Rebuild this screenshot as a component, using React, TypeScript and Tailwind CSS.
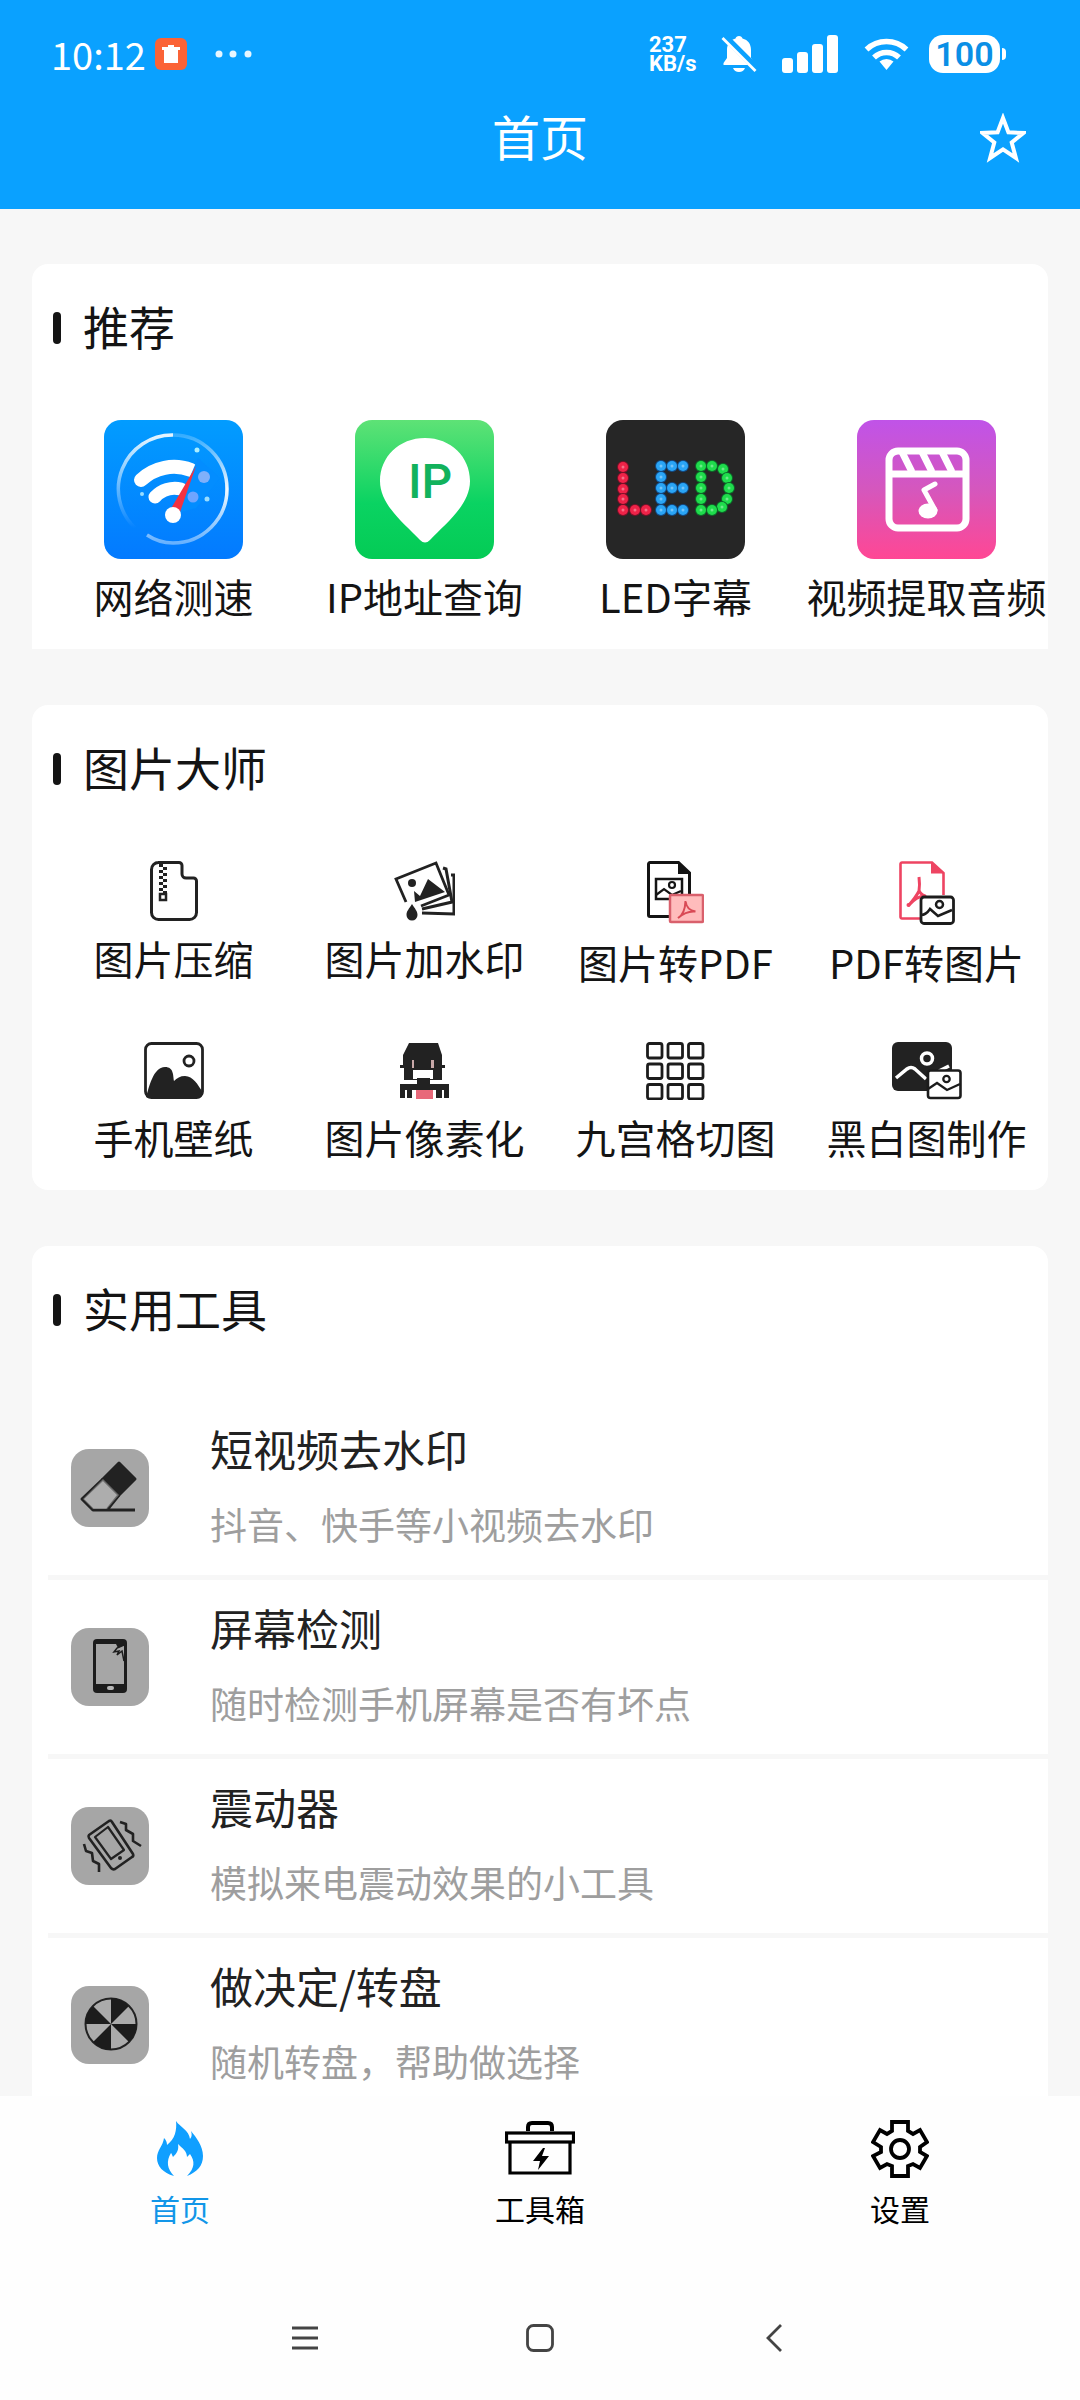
import React from 'react';

const INK = '#222222';

/* ---------- Status bar ---------- */

const TrashBadge = () => (
  <svg width="32" height="32" viewBox="0 0 32 32">
    <rect width="32" height="32" rx="6" fill="#fb6336" />
    <path d="M13 7h6v2h6v3H7V9h6z" fill="#fff" />
    <path d="M9 12h14v13H9z" fill="#fff" />
  </svg>
);

const MoreDots = () => (
  <svg width="38" height="8" viewBox="0 0 38 8" fill="#fff" fillOpacity="0.9">
    <circle cx="4" cy="4" r="3.5" />
    <circle cx="18" cy="4" r="3.5" />
    <circle cx="33" cy="4" r="3.5" />
  </svg>
);

const BellOffIcon = () => (
  <svg width="41" height="38" viewBox="0 0 41 38">
    <path
      d="M18 1c2 0 3 1 3.500 2.500C27 5 30 9 30 15v8l3.500 5v2h-31v-2L6 23v-8C6 9 9 5 14.500 3.500 15 2 16 1 18 1z"
      fill="#fff"
    />
    <path d="M12 33h12c-1 2.500-3 4-6 4s-5-1.500-6-4z" fill="#fff" />
    <path d="M3 1l33 33" stroke="#0aa1ff" strokeWidth="7" />
    <path d="M1.500 3l33 33" stroke="#fff" strokeWidth="2.800" />
  </svg>
);

const SignalIcon = () => (
  <svg width="62" height="40" viewBox="0 0 62 40" fill="#fff">
    <rect x="0" y="24" width="11" height="15" rx="3" />
    <rect x="15" y="18" width="11" height="21" rx="3" />
    <rect x="30" y="10" width="11" height="29" rx="3" />
    <rect x="45" y="1" width="11" height="38" rx="3" />
  </svg>
);

const WifiIcon = () => (
  <svg width="45" height="34" viewBox="0 0 45 34" fill="none" stroke="#fff" strokeWidth="5.500">
    <path d="M2.500 12.500a29 29 0 0 1 40 0" />
    <path d="M10 20.500a18 18 0 0 1 25 0" />
    <path d="M22.500 33l-7-8.500a11 11 0 0 1 14 0z" fill="#fff" stroke="none" />
  </svg>
);

const StarIcon = () => (
  <svg width="46" height="50" viewBox="0 0 46 50">
    <path
      d="M23 5l5.400 14.300 15 .7-11.700 9.500 4.200 15.500L23 36.300 10.100 45l4.200-15.500L2.600 20l15-.7z"
      fill="none"
      stroke="#fff"
      strokeWidth="4"
    />
  </svg>
);

/* ---------- Recommended tiles ---------- */

const SpeedTestTile = () => (
  <svg width="139" height="139" viewBox="0 0 139 139">
    <defs>
      <linearGradient id="speedBg" x1="0" y1="0" x2="0" y2="1">
        <stop offset="0" stopColor="#029cff" />
        <stop offset="1" stopColor="#037aff" />
      </linearGradient>
      <linearGradient id="speedRingA" x1="0" y1="0" x2="0" y2="1">
        <stop offset="0" stopColor="#fff" stopOpacity="0.9" />
        <stop offset="1" stopColor="#fff" stopOpacity="0" />
      </linearGradient>
      <linearGradient id="speedRingB" x1="0" y1="0" x2="0" y2="1">
        <stop offset="0" stopColor="#fff" stopOpacity="0.2" />
        <stop offset="0.5" stopColor="#fff" stopOpacity="0.95" />
        <stop offset="1" stopColor="#fff" stopOpacity="0.4" />
      </linearGradient>
    </defs>
    <rect width="139" height="139" rx="17" fill="url(#speedBg)" />
    <path d="M31 108A54 54 0 0 1 69 15" fill="none" stroke="url(#speedRingA)" strokeWidth="3.500" />
    <path d="M69 15a54 54 0 0 1 0 108q-14 0-26-8" fill="none" stroke="url(#speedRingB)" strokeWidth="3.500" />
    <path d="M37 60a48 48 0 0 1 50-10" fill="none" stroke="#fff" strokeWidth="14" strokeLinecap="round" />
    <path d="M51 77a27 27 0 0 1 26-8" fill="none" stroke="#fff" strokeWidth="13" strokeLinecap="round" />
    <path d="M94 38l22 20-24 30-22 6z" fill="#038dff" />
    <circle cx="100" cy="57" r="6" fill="#7fb0fa" />
    <circle cx="89" cy="77" r="5.500" fill="#6fa5ff" />
    <circle cx="93" cy="30" r="2.500" fill="#aef" />
    <circle cx="103" cy="79" r="2.500" fill="#9df" />
    <circle cx="38" cy="74" r="2" fill="#9df" />
    <path d="M92 46L65 92l10 3z" fill="#f4323f" />
    <circle cx="69" cy="95" r="8" fill="#fff" />
  </svg>
);

const IpTile = () => (
  <svg width="139" height="139" viewBox="0 0 139 139">
    <defs>
      <linearGradient id="ipBg" x1="0" y1="0" x2="0" y2="1">
        <stop offset="0" stopColor="#5ee276" />
        <stop offset="0.6" stopColor="#0ad362" />
        <stop offset="1" stopColor="#04cb55" />
      </linearGradient>
    </defs>
    <rect width="139" height="139" rx="17" fill="url(#ipBg)" />
    <path
      d="M70 18c26 0 45 19 45 43 0 24-24 42-40 59q-5 5-10 0C49 103 25 85 25 61c0-24 19-43 45-43z"
      fill="#fff"
    />
    <text x="75" y="78" textAnchor="middle" fontFamily="Roboto, sans-serif" fontWeight="500" fontSize="48" fill="#12b25c">
      IP
    </text>
  </svg>
);

const LED_DOTS = [
  { color: '#ee2348', glow: '#7a1028', dots: [[17, 47], [17, 58], [17, 69], [17, 79], [17, 90], [29, 90], [40, 90]] },
  {
    color: '#2aa5f5',
    glow: '#124a86',
    dots: [
      [55, 46], [66, 46], [77, 46], [55, 57], [55, 68], [66, 68], [77, 68],
      [55, 79], [55, 90], [66, 90], [77, 90],
    ],
  },
  {
    color: '#1fdc4c',
    glow: '#0d6a2a',
    dots: [
      [95, 46], [106, 46], [117, 49], [121, 58], [123, 68], [121, 79], [116, 87],
      [106, 90], [95, 90], [95, 79], [95, 68], [95, 57],
    ],
  },
];

const LedTile = () => (
  <svg width="139" height="139" viewBox="0 0 139 139">
    <rect width="139" height="139" rx="17" fill="#262626" />
    {LED_DOTS.map((letter) =>
      letter.dots.map(([x, y]) => (
        <g key={`${x}-${y}`}>
          <circle cx={x} cy={y} r="6" fill={letter.glow} />
          <circle cx={x} cy={y} r="5" fill={letter.color} />
          <circle cx={x} cy={y} r="1.500" fill="#fff" fillOpacity="0.35" />
        </g>
      ))
    )}
  </svg>
);

const ExtractAudioTile = () => (
  <svg width="139" height="139" viewBox="0 0 139 139">
    <defs>
      <linearGradient id="audioBg" x1="0" y1="0" x2="0" y2="1">
        <stop offset="0" stopColor="#c053e8" />
        <stop offset="0.5" stopColor="#d557bd" />
        <stop offset="1" stopColor="#ff4794" />
      </linearGradient>
    </defs>
    <rect width="139" height="139" rx="17" fill="url(#audioBg)" />
    <rect x="32" y="31" width="77" height="77" rx="9" fill="none" stroke="#fff" strokeWidth="7" />
    <path d="M32 54h77" stroke="#fff" strokeWidth="7" />
    <path d="M45 32l10 20M65 32l10 20M85 32l10 20" stroke="#fff" strokeWidth="7" />
    <ellipse cx="71" cy="91" rx="9.500" ry="7.500" fill="#fff" />
    <path d="M78 64l-11 6 11 20" fill="none" stroke="#fff" strokeWidth="5" strokeLinejoin="round" strokeLinecap="round" />
  </svg>
);

/* ---------- Picture tools ---------- */

const ZipIcon = () => (
  <svg width="48" height="60" viewBox="0 0 48 60" fill="none" stroke={INK} strokeWidth="3">
    <path d="M8 1.500h21a3 3 0 0 1 3 3V13a4 4 0 0 0 4 4h7.500a3 3 0 0 1 3 3v31.500a7 7 0 0 1-7 7H8.500a7 7 0 0 1-7-7V8.500a7 7 0 0 1 7-7z" />
    <path d="M11 3v28" strokeDasharray="3 3" strokeWidth="4" />
    <path d="M15 6v26" strokeDasharray="3 3" strokeWidth="4" />
    <rect x="10" y="33" width="6" height="6" strokeWidth="2.500" />
  </svg>
);

const WatermarkIcon = () => (
  <svg width="61" height="60" viewBox="0 0 61 60" fill="none" stroke={INK} strokeWidth="2.800">
    <path d="M12 41L2 18 42 2l13 32-28 11" />
    <path d="M49 7l3 1 6 33-30 7" strokeWidth="3" />
    <path d="M57 14h3v39l-32-1" strokeWidth="3" />
    <circle cx="18" cy="22" r="4" fill={INK} stroke="none" />
    <path d="M21 41l-1-11 6 5 8-17 17 13z" fill={INK} stroke="none" />
    <path d="M18 43c3 5 5.500 7 5.500 11a5.500 5.500 0 0 1-11 0c0-4 2.500-6 5.500-11z" fill={INK} stroke="none" />
  </svg>
);

const ImageToPdfIcon = () => (
  <svg width="57" height="64" viewBox="0 0 57 64" fill="none" stroke="#141414" strokeWidth="3">
    <path d="M22 55.500H3a1.500 1.500 0 0 1-1.500-1.500V3A1.500 1.500 0 0 1 3 1.500h28.500L42.500 12v21" />
    <path d="M31 1v12h12z" fill="#141414" stroke="none" />
    <rect x="9" y="18" width="26" height="20" strokeWidth="2.500" />
    <circle cx="25" cy="24" r="3" strokeWidth="2.200" />
    <path d="M9 34l8-6 8 6 9-4" strokeWidth="2.200" />
    <rect x="23" y="34" width="33" height="27" rx="1" fill="#ffbcbc" stroke="#d9606c" strokeWidth="2.500" />
    <path d="M31 57q7-4 7.500-17 1 9 10 10.500-9-1-17.500 6.500z" stroke="#d94a55" strokeWidth="2" />
  </svg>
);

const PdfToImageIcon = () => (
  <svg width="56" height="64" viewBox="0 0 56 64" fill="none" stroke="#ee4462" strokeWidth="2.600">
    <path d="M21 57.500H3A1.500 1.500 0 0 1 1.500 56V3A1.500 1.500 0 0 1 3 1.500h30L44.500 12v22" />
    <path d="M32 1v11.500h13z" fill="#ee4462" stroke="none" />
    <path d="M20 16q1 8 0 14-3 6-10 14 8-9 16-9-5-2-6-6" strokeLinejoin="round" strokeWidth="3" />
    <circle cx="9.500" cy="44" r="2" fill="#ee4462" stroke="none" />
    <rect x="22" y="36" width="32.500" height="26.500" rx="3" fill="#fff" stroke="#1c1c1c" strokeWidth="2.800" />
    <circle cx="40.500" cy="43.500" r="3.500" stroke="#1c1c1c" strokeWidth="2.500" />
    <path d="M22 54q5 0 9-6l8 7 14-6" stroke="#1c1c1c" strokeWidth="2.500" />
  </svg>
);

const WallpaperIcon = () => (
  <svg width="60" height="58" viewBox="0 0 60 58" fill="none" stroke={INK} strokeWidth="2.800">
    <rect x="1.500" y="1.500" width="57" height="54" rx="6" />
    <circle cx="45" cy="19" r="5" />
    <path
      d="M2 55C5 46 9 25 21 25c9 0 8 9 9 14 3-3 6-5 11-5 8 0 13 9 17 15l-2 7H4z"
      fill={INK}
      stroke="none"
    />
  </svg>
);

const PixelateIcon = () => (
  <svg width="49" height="58" viewBox="0 0 49 58" fill={INK}>
    <path d="M9 1h29l4 12v10h3v3h-3v12H4V26H0v-3h3V13z" />
    <path d="M12 18h2v8h-2zM31 18h3v8h-3z" fill="#c9a9a9" />
    <path d="M13 28h20v9H13z" fill="#fff" />
    <path d="M17 36h13v6h19v14h-5v-8h-2v8h-6v-8H12v8H7v-8H5v8H0V42h17z" />
    <path d="M16 48h17v9H16z" fill="#e8697a" />
  </svg>
);

const NineGridIcon = () => (
  <svg width="59" height="58" viewBox="0 0 59 58" fill="none" stroke="#1c1c1c" strokeWidth="2.800">
    {[1.5, 22, 42.5].map((y) =>
      [1.5, 22, 42.5].map((x) => <rect key={`${x}-${y}`} x={x} y={y} width="14.500" height="14.500" rx="2" />)
    )}
  </svg>
);

const BlackWhiteIcon = () => (
  <svg width="70" height="58" viewBox="0 0 70 58" fill="none">
    <rect width="60" height="49" rx="6" fill={INK} />
    <circle cx="35" cy="16.500" r="5.500" stroke="#fff" strokeWidth="3.500" />
    <path d="M4 36l11-9q4-3 8 0l11 10M47 29l10-5" stroke="#fff" strokeWidth="3.500" />
    <rect x="36" y="28.500" width="32.500" height="27.500" rx="2.500" fill="#fff" stroke="#1c1c1c" strokeWidth="2.600" />
    <circle cx="54.500" cy="37" r="3.200" stroke="#1c1c1c" strokeWidth="2.300" />
    <path d="M36 47l9-6 10 7 13-6" stroke="#1c1c1c" strokeWidth="2.300" />
  </svg>
);

/* ---------- Utility list ---------- */

const EraserIcon = () => (
  <svg width="78" height="78" viewBox="0 0 78 78" fill="none" stroke={INK} strokeWidth="3" strokeLinejoin="round">
    <path d="M48 14l16 16-16 16-16-16z" fill={INK} />
    <path d="M32 30L11 50l11 11h14l12-15M22 61h42" />
    <path d="M32 30l16 16-12 14H22L12 50z" fill="#b4b4b4" fillOpacity="0.5" stroke="none" />
  </svg>
);

const ScreenIcon = () => (
  <svg width="78" height="78" viewBox="0 0 78 78" fill="none">
    <rect x="22" y="11" width="34" height="54" rx="4" fill="#1c1c1c" />
    <path d="M25 16h20l2 4 6-3v39H25z" fill="#a6a6a6" />
    <path d="M53 17l-7 3-3 4 5-1-2 4 5-4 2 10" stroke="#1c1c1c" strokeWidth="1.500" />
    <rect x="36" y="58" width="7" height="4" rx="2" fill="#b5b5b5" />
  </svg>
);

const VibrateIcon = () => (
  <svg width="78" height="78" viewBox="0 0 78 78" fill="none" stroke={INK} strokeWidth="2.600" strokeLinejoin="round">
    <path d="M38 14L18 28q-1 1 0 3l22 30q2 2 4 1l17-12q2-1 1-3L41 15q-1-2-3-1z" />
    <path d="M37 20L24 30l16 22 13-9z" strokeWidth="2.200" />
    <circle cx="49" cy="51" r="2" fill={INK} stroke="none" />
    <path d="M49 15l6 2v6l7 4v7l8 5M13 37l2 7 6 2 1 8 6 3v8" />
  </svg>
);

const WheelIcon = () => (
  <svg width="78" height="78" viewBox="0 0 78 78">
    <circle cx="40" cy="38" r="25.500" fill="#b4b4b4" fillOpacity="0.4" stroke={INK} strokeWidth="2" />
    <path
      d="M40 38V12a26 26 0 0 1 18 8zM40 38h26a26 26 0 0 1-8 18zM40 38v26a26 26 0 0 1-18-8zM40 38H14a26 26 0 0 1 8-18z"
      fill="#1c1c1c"
    />
  </svg>
);

/* ---------- Bottom tabs ---------- */

const FireIcon = () => (
  <svg width="46" height="56" viewBox="0 0 46 56">
    <path
      d="M19 0c4 6 13 9 14 18 2-2 2-5 1-8 5 6 12 15 12 25 0 10-6 16-16 20 8-8 8-15 3-22l-3 3c0-6-5-9-9-13 1 6-1 9-5 13-1-2-1-3-2-4-5 8-4 16 3 23C6 52 0 45 0 37c0-8 6-12 7-20 2 2 3 4 3 7 8-6 10-15 9-24z"
      fill="#109fff"
    />
  </svg>
);

const ToolboxIcon = () => (
  <svg width="70" height="56" viewBox="0 0 70 56" fill="none" stroke="#000" strokeWidth="3.200">
    <path d="M23 10V6q0-4 4-4h16q4 0 4 4v4" strokeWidth="4" />
    <rect x="1.500" y="12" width="67" height="9" />
    <path d="M5 21v31h60V21" />
    <path d="M38 27L28 40h7l-2 9 11-14h-7l3-8z" fill="#000" stroke="none" />
  </svg>
);

const GearIcon = () => (
  <svg width="58" height="58" viewBox="-1 -1 58 58" fill="none" stroke="#000" strokeWidth="3.800">
    <path d="M20 1h16v9l5 3 7-4 7 12-7 5v5l7 4-7 12-7-4-5 2v10H20V45l-5-2-7 4L1 35l8-4v-5l-8-5L8 9l7 4 5-3z" />
    <circle cx="28" cy="28" r="9" />
  </svg>
);

const RECOMMENDED = [
  { label: '网络测速', icon: <SpeedTestTile /> },
  { label: 'IP地址查询', icon: <IpTile /> },
  { label: 'LED字幕', icon: <LedTile /> },
  { label: '视频提取音频', icon: <ExtractAudioTile /> },
];

const PICTURE_TOOLS = [
  { label: '图片压缩', icon: <ZipIcon /> },
  { label: '图片加水印', icon: <WatermarkIcon /> },
  { label: '图片转PDF', icon: <ImageToPdfIcon /> },
  { label: 'PDF转图片', icon: <PdfToImageIcon /> },
  { label: '手机壁纸', icon: <WallpaperIcon /> },
  { label: '图片像素化', icon: <PixelateIcon /> },
  { label: '九宫格切图', icon: <NineGridIcon /> },
  { label: '黑白图制作', icon: <BlackWhiteIcon /> },
];

const UTILITIES = [
  { title: '短视频去水印', desc: '抖音、快手等小视频去水印', icon: <EraserIcon /> },
  { title: '屏幕检测', desc: '随时检测手机屏幕是否有坏点', icon: <ScreenIcon /> },
  { title: '震动器', desc: '模拟来电震动效果的小工具', icon: <VibrateIcon /> },
  { title: '做决定/转盘', desc: '随机转盘，帮助做选择', icon: <WheelIcon /> },
];

const TABS = [
  { label: '首页', icon: <FireIcon />, active: true },
  { label: '工具箱', icon: <ToolboxIcon />, active: false },
  { label: '设置', icon: <GearIcon />, active: false },
];

type Tool = { label: string; icon: React.ReactNode };

const SectionTitle: React.FC<{ children: React.ReactNode }> = ({ children }) => (
  <div className="flex items-center gap-[22px] pl-[21px]">
    <span className="h-8 w-2 rounded-full bg-[#141414]" />
    <h2 className="pb-1.5 text-[46px] leading-[42px] text-[#141414]">{children}</h2>
  </div>
);

const ToolGrid: React.FC<{ items: Tool[] }> = ({ items }) => (
  <div className="-mr-1 mt-[68px] grid grid-cols-4 gap-y-14 pl-4">
    {items.map((item) => (
      <button key={item.label} className="flex min-w-0 flex-col items-center">
        {item.icon}
        <span className="mt-[13px] whitespace-nowrap text-[40px] leading-[48px] text-[#141414]">{item.label}</span>
      </button>
    ))}
  </div>
);

export default function App() {
  return (
    <div className="flex h-screen flex-col bg-[#f7f7f7] font-['Noto_Sans_CJK_SC',sans-serif]">
      {/* Header */}
      <header className="shrink-0 bg-[#0aa1ff] pb-[41px] text-white">
        <div className="flex h-[108px] items-center justify-between pl-[51px] pr-[74px]">
          <div className="flex items-center">
            <span className="w-[104px] text-[38px] leading-[48px]">10:12</span>
            <TrashBadge />
            <span className="ml-7">
              <MoreDots />
            </span>
          </div>
          <div className="flex items-center gap-5">
            <span className="w-[52px] whitespace-pre-line font-['Roboto',sans-serif] text-[22px] font-bold leading-[19px]">
              {'237\nKB/s'}
            </span>
            <BellOffIcon />
            <SignalIcon />
            <WifiIcon />
            <div className="flex items-center gap-0.5">
              <span className="flex h-[38px] w-[71px] items-center justify-center rounded-[14px] bg-white font-['Roboto',sans-serif] text-[34px] font-semibold leading-none text-[#0a8fe6]">
                100
              </span>
              <span className="h-3 w-1 rounded-r-full bg-white" />
            </div>
          </div>
        </div>
        <div className="grid h-[60px] grid-cols-[1fr_auto_1fr] items-center px-[54px]">
          <h1 className="col-start-2 pb-1.5 text-[48px] leading-[54px]">首页</h1>
          <button aria-label="收藏" className="justify-self-end">
            <StarIcon />
          </button>
        </div>
      </header>

      {/* Main Content */}
      <main className="min-h-0 flex-1 overflow-y-auto px-8 pt-[55px] [scrollbar-width:none]">
        <div className="flex flex-col gap-14">
          <section className="overflow-hidden rounded-t-2xl bg-white pb-[29px] pt-10">
            <SectionTitle>推荐</SectionTitle>
            <ToolGrid items={RECOMMENDED} />
          </section>

          <section className="overflow-hidden rounded-2xl bg-white pb-[29px] pt-10">
            <SectionTitle>图片大师</SectionTitle>
            <ToolGrid items={PICTURE_TOOLS} />
          </section>

          <section className="overflow-hidden rounded-t-2xl bg-white pt-10">
            <SectionTitle>实用工具</SectionTitle>
            <ul className="mt-[67px] pl-4">
              {UTILITIES.map((item) => (
                <li key={item.title} className="border-b-[5px] border-[#f7f7f7]">
                  <button className="flex w-full items-center gap-[61px] py-[9px] pl-[23px] text-left">
                    <span className="shrink-0 rounded-[18px] bg-[#a6a6a6]">{item.icon}</span>
                    <span className="flex flex-col pb-1">
                      <span className="text-[43px] leading-[76px] text-[#222222]">{item.title}</span>
                      <span className="text-[37px] leading-[76px] text-[#9e9e9e]">{item.desc}</span>
                    </span>
                  </button>
                </li>
              ))}
            </ul>
          </section>
        </div>
      </main>

      {/* Tab bar */}
      <footer className="shrink-0 bg-[#fefefe]">
        <nav className="grid grid-cols-3 pt-6">
          {TABS.map((tab) => (
            <a key={tab.label} href="#" className="flex flex-col items-center">
              <span className="flex h-[58px] items-center">{tab.icon}</span>
              <span className={`mt-2.5 text-[30px] leading-[40px] ${tab.active ? 'text-[#1296e8]' : 'text-black'}`}>
                {tab.label}
              </span>
            </a>
          ))}
        </nav>

        {/* System navigation */}
        <div className="flex justify-center gap-[207px] pb-12 pt-24">
          <button aria-label="菜单">
            <svg width="28" height="28" viewBox="0 0 28 28" stroke="#444" strokeWidth="2.800">
              <path d="M1 4h26M1 14h26M1 24h26" />
            </svg>
          </button>
          <button aria-label="桌面">
            <svg width="28" height="28" viewBox="0 0 28 28" fill="none" stroke="#444" strokeWidth="2.800">
              <rect x="1.500" y="1.500" width="25" height="25" rx="6" />
            </svg>
          </button>
          <button aria-label="返回">
            <svg width="28" height="28" viewBox="0 0 28 28" fill="none" stroke="#444" strokeWidth="2.800">
              <path d="M20 1L7 14l13 13" />
            </svg>
          </button>
        </div>
      </footer>
    </div>
  );
}
